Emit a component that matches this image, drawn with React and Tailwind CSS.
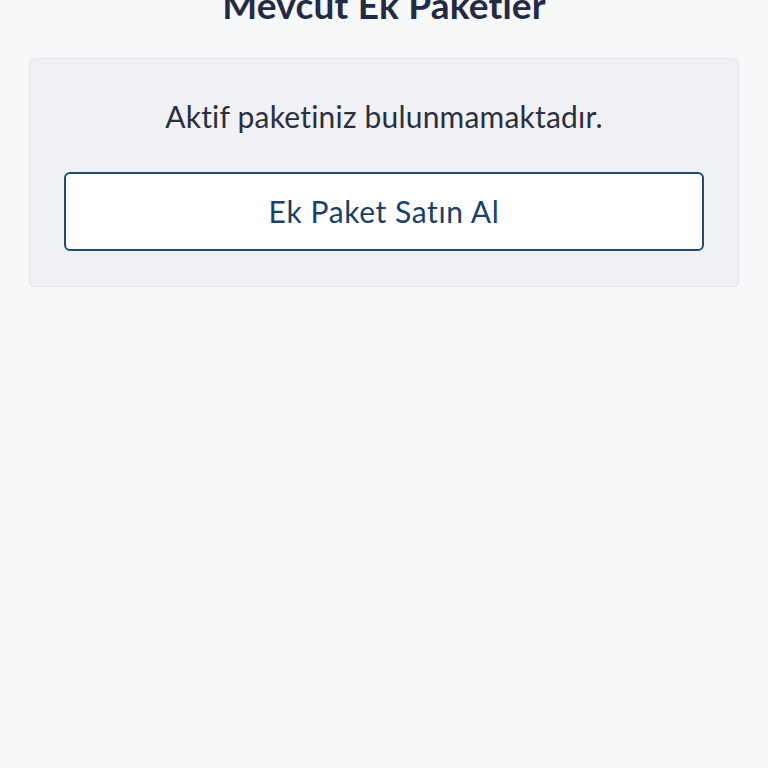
export default function App() {
  return (
    <div className="min-h-[768px] w-full bg-[#f7f8fa] overflow-hidden" style={{ fontFamily: "Lato, 'Noto Sans', sans-serif" }}>
      <h1 className="-mt-[17px] h-[44px] text-center text-[37px] leading-[44px] font-bold tracking-[0.2px] text-[#252a44]">Mevcut Ek Paketler</h1>
      <div className="mx-[29px] mt-[31px] rounded-[6px] border border-[#e3e5ea] bg-[#f0f1f4] px-[34px] pt-[38px] pb-[35px]">
        <p className="text-center text-[30px] leading-[38px] tracking-[0.2px] text-[#2b2f3e]">Aktif paketiniz bulunmamaktadır.</p>
        <button className="mt-[37px] flex h-[79px] w-full items-center justify-center rounded-[6px] border-2 border-[#1f4a7a] bg-white text-[30px] tracking-[0.6px] text-[#1b3f6b]">Ek Paket Satın Al</button>
      </div>
    </div>
  );
}
